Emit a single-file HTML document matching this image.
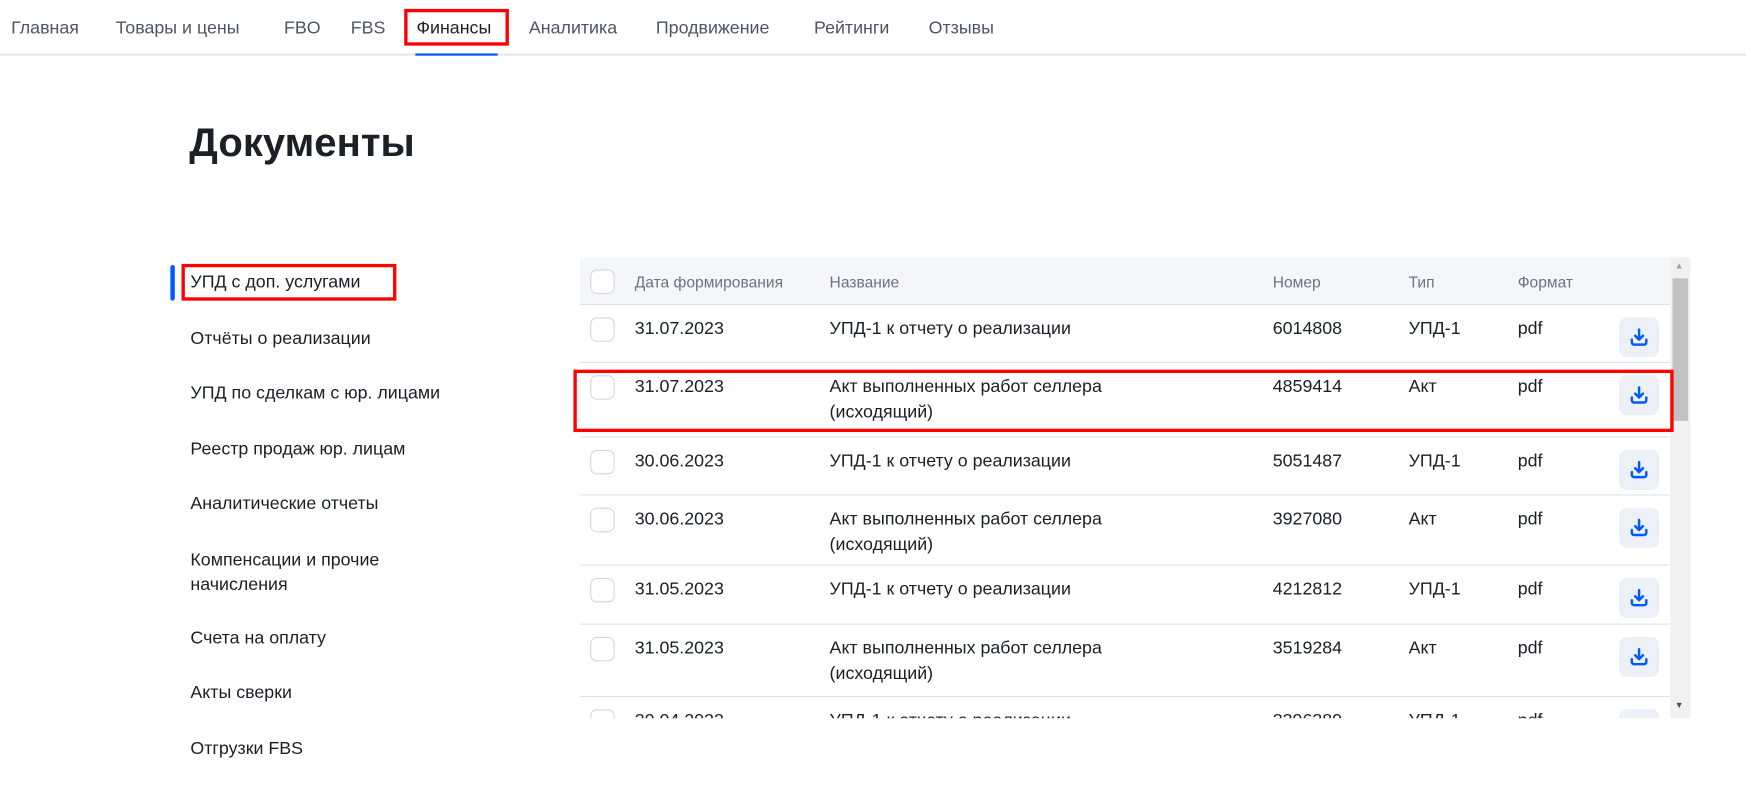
<!DOCTYPE html>
<html><head><meta charset="utf-8"><style>
html,body{margin:0;padding:0;background:#fff;overflow:hidden;width:1746px;height:793px}
#w{position:absolute;left:0;top:0;width:1570px;height:713px;transform:scale(1.1135);transform-origin:0 0;font-family:"Liberation Sans",sans-serif;color:#1b1f26}
.a{position:absolute;white-space:nowrap}
.nav{font-size:16px;color:#4d5563;top:17px}
.side{font-size:16px;left:171px;color:#1b1f26}
.hd{font-size:14px;color:#6b7280;top:245px}
.cb{position:absolute;width:20px;height:20px;border:1.5px solid #d3d8e0;border-radius:6px;background:#fff;left:530px}
.t{font-size:16px}
.line{position:absolute;left:521px;width:979px;height:1px;background:#dde2ea}
.btn{position:absolute;left:1454px;width:36px;height:36px;border-radius:7px;background:#edf1f7}
.btn svg{position:absolute;left:9px;top:9px}
.red{position:absolute;border:3px solid #f00;box-sizing:border-box}
</style></head><body><div id="w">
<div class="a nav" style="left:10px">Главная</div>
<div class="a nav" style="left:104px">Товары и цены</div>
<div class="a nav" style="left:255px">FBO</div>
<div class="a nav" style="left:315px">FBS</div>
<div class="a nav" style="left:374px;color:#1b1f26">Финансы</div>
<div class="a nav" style="left:475px">Аналитика</div>
<div class="a nav" style="left:589px">Продвижение</div>
<div class="a nav" style="left:731px">Рейтинги</div>
<div class="a nav" style="left:834px">Отзывы</div>
<div class="red" style="left:363px;top:8px;width:94px;height:33px"></div>
<div style="position:absolute;left:0;top:48px;width:1570px;height:2px;background:#e6e9ee"></div>
<div style="position:absolute;left:373px;top:48px;width:74px;height:2px;background:#005bff"></div>

<div class="a" style="left:170px;top:107px;font-size:36px;font-weight:bold;color:#1b1f26">Документы</div>

<div style="position:absolute;left:153px;top:238px;width:4px;height:32px;border-radius:2px;background:#005bff"></div>
<div class="red" style="left:163px;top:237px;width:193px;height:33px"></div>
<div class="a side" style="top:245px">УПД с доп. услугами</div>
<div class="a side" style="top:296px">Отчёты о реализации</div>
<div class="a side" style="top:345px">УПД по сделкам с юр. лицами</div>
<div class="a side" style="top:395px">Реестр продаж юр. лицам</div>
<div class="a side" style="top:444px">Аналитические отчеты</div>
<div class="a side" style="top:493px;line-height:22px">Компенсации и прочие<br>начисления</div>
<div class="a side" style="top:565px">Счета на оплату</div>
<div class="a side" style="top:614px">Акты сверки</div>
<div class="a side" style="top:664px">Отгрузки FBS</div>

<div style="position:absolute;left:521px;top:231px;width:979px;height:42px;background:#f5f6fa"></div>
<div class="cb" style="top:242px"></div>
<div class="a hd" style="left:570px">Дата формирования</div>
<div class="a hd" style="left:745px">Название</div>
<div class="a hd" style="left:1143px">Номер</div>
<div class="a hd" style="left:1265px">Тип</div>
<div class="a hd" style="left:1363px">Формат</div>
<div class="line" style="top:273px"></div>

<div style="position:absolute;left:0;top:0;width:1500px;height:645px;overflow:hidden">
<div id="rows"></div>
</div>

<div style="position:absolute;left:1500px;top:231px;width:18px;height:414px;background:#f1f1f1"></div>
<div style="position:absolute;left:1502px;top:250px;width:14px;height:128px;background:#c1c1c1"></div>
<div class="a" style="left:1504px;top:234px;font-size:8px;color:#a3a3a3">▲</div>
<div class="a" style="left:1504px;top:629px;font-size:8px;color:#505050">▼</div>
<div class="red" style="left:515px;top:332px;width:988px;height:56px"></div>
</div>
<script>
var rows=[[273,"31.07.2023","УПД-1 к отчету о реализации","6014808","УПД-1",52],
[325,"31.07.2023","Акт выполненных работ селлера<br>(исходящий)","4859414","Акт",67],
[392,"30.06.2023","УПД-1 к отчету о реализации","5051487","УПД-1",52],
[444,"30.06.2023","Акт выполненных работ селлера<br>(исходящий)","3927080","Акт",63],
[507,"31.05.2023","УПД-1 к отчету о реализации","4212812","УПД-1",53],
[560,"31.05.2023","Акт выполненных работ селлера<br>(исходящий)","3519284","Акт",65],
[625,"30.04.2023","УПД-1 к отчету о реализации","3396380","УПД-1",60]];
var h="";var ic='<svg width="18" height="18" viewBox="0 0 18 18"><path d="M9 2v9M5.5 7.5L9 11l3.5-3.5M2.5 11v2.5a2 2 0 0 0 2 2h9a2 2 0 0 0 2-2V11" fill="none" stroke="#005bff" stroke-width="2.2" stroke-linecap="round" stroke-linejoin="round"/></svg>';
rows.forEach(function(r){var y=r[0];
h+='<div class="cb" style="top:'+(y+12)+'px"></div>';
h+='<div class="a t" style="left:570px;top:'+(y+14)+'px">'+r[1]+'</div>';
h+='<div class="a t" style="left:745px;top:'+(y+14)+'px;line-height:23px;margin-top:-3px">'+r[2]+'</div>';
h+='<div class="a t" style="left:1143px;top:'+(y+14)+'px">'+r[3]+'</div>';
h+='<div class="a t" style="left:1265px;top:'+(y+14)+'px">'+r[4]+'</div>';
h+='<div class="a t" style="left:1363px;top:'+(y+14)+'px">pdf</div>';
h+='<div class="btn" style="top:'+(y+12)+'px">'+ic+'</div>';
h+='<div class="line" style="top:'+(y+r[5])+'px"></div>';});
document.getElementById("rows").innerHTML=h;
</script>
</body></html>
